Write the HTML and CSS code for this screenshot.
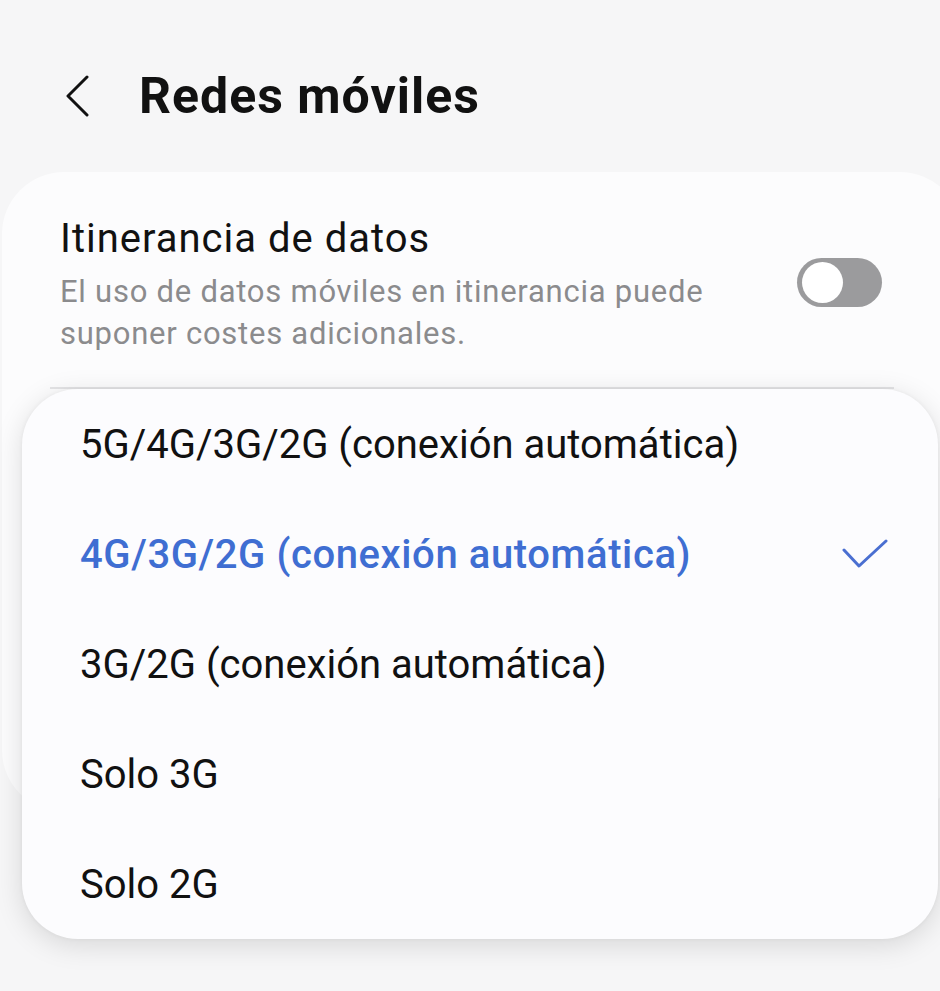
FILE: index.html
```html
<!DOCTYPE html>
<html lang="es">
<head>
<meta charset="utf-8">
<title>Redes móviles</title>
<link rel="stylesheet" href="styles.css">
</head>
<body>
<div class="screen">
  <header class="topbar">
    <svg class="back" width="30" height="42" viewBox="0 0 30 42"><path d="M25 2 L6 21 L25 40" fill="none" stroke="#111" stroke-width="3" stroke-linecap="round" stroke-linejoin="round"/></svg>
    <h1 class="title">Redes móviles</h1>
  </header>
  <section class="card">
    <div class="setting">
      <div class="setting-text">
        <div class="setting-title">Itinerancia de datos</div>
        <div class="setting-sub">El uso de datos móviles en itinerancia puede suponer costes adicionales.</div>
      </div>
      <div class="toggle"><span class="knob"></span></div>
    </div>
    <div class="divider"></div>
  </section>
  <div class="popup">
    <div class="option">5G/4G/3G/2G (conexión automática)</div>
    <div class="option selected">4G/3G/2G (conexión automática)
      <svg class="check" width="46" height="30" viewBox="0 0 46 30"><path d="M2 11 L17 27 L44 2" fill="none" stroke="#4a6fd1" stroke-width="3" stroke-linecap="round" stroke-linejoin="round"/></svg>
    </div>
    <div class="option">3G/2G (conexión automática)</div>
    <div class="option">Solo 3G</div>
    <div class="option">Solo 2G</div>
  </div>
</div>
</body>
</html>
```
FILE: styles.css
```css
html, body {
  margin: 0;
  padding: 0;
  background: #f6f6f7;
  font-family: Roboto, "Noto Sans", sans-serif;
  color: #111;
}
.screen {
  position: relative;
  width: 940px;
  height: 991px;
  overflow: hidden;
}
.topbar {
  height: 172px;
  display: flex;
  align-items: center;
  padding-left: 62px;
  padding-top: 20px;
  box-sizing: border-box;
}
.back {
  display: block;
  margin-right: 47px;
}
.title {
  margin: 0;
  font-size: 50px;
  font-weight: 700;
  letter-spacing: 1px;
}
.card {
  margin-left: 2px;
  width: 960px;
  height: 640px;
  background: #fcfcfd;
  border-radius: 62px;
  box-sizing: border-box;
  padding-top: 41px;
}
.setting {
  display: flex;
  align-items: center;
  padding-left: 58px;
  padding-right: 79px;
}
.setting-text {
  width: 690px;
}
.setting-title {
  font-size: 40px;
  line-height: 52px;
  letter-spacing: 1px;
}
.setting-sub {
  font-size: 31px;
  line-height: 42px;
  color: #8b8b8d;
  letter-spacing: 0.75px;
  margin-top: 6px;
  width: 690px;
}
.toggle {
  margin-left: 47px;
  width: 85px;
  height: 49px;
  border-radius: 25px;
  background: #9b9b9d;
  position: relative;
  margin-top: -4px;
}
.knob {
  position: absolute;
  left: 5px;
  top: 4px;
  width: 41px;
  height: 41px;
  border-radius: 50%;
  background: #fff;
}
.divider {
  margin: 32px 0 0 48px;
  width: 844px;
  height: 2px;
  background: #e4e4e6;
}
.popup {
  position: absolute;
  left: 22px;
  top: 389px;
  width: 916px;
  height: 550px;
  background: #fcfcfe;
  border-radius: 56px;
  box-shadow: 0 6px 28px rgba(0,0,0,0.13), 0 0 4px rgba(0,0,0,0.05);
}
.option {
  height: 110px;
  display: flex;
  align-items: center;
  padding-left: 58px;
  padding-right: 50px;
  font-size: 40px;
  letter-spacing: 0;
  color: #111;
}
.option.selected {
  color: #3f6ed2;
  font-weight: 500;
  letter-spacing: 0.6px;
  justify-content: space-between;
}
.check {
  display: block;
}
```
